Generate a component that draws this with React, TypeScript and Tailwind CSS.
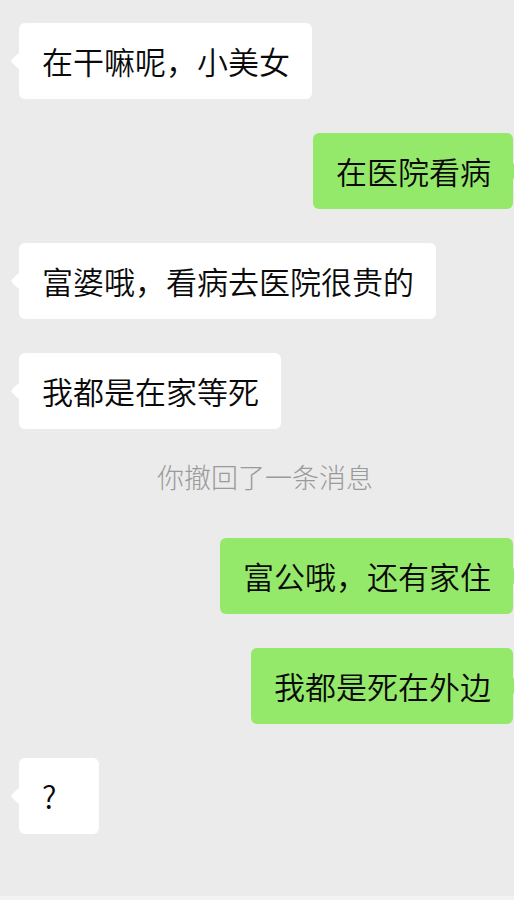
import React from 'react';

type Msg =
  | { kind: 'left' | 'right'; text: string }
  | { kind: 'system'; text: string };

const messages: Msg[] = [
  { kind: 'left', text: '在干嘛呢，小美女' },
  { kind: 'right', text: '在医院看病' },
  { kind: 'left', text: '富婆哦，看病去医院很贵的' },
  { kind: 'left', text: '我都是在家等死' },
  { kind: 'system', text: '你撤回了一条消息' },
  { kind: 'right', text: '富公哦，还有家住' },
  { kind: 'right', text: '我都是死在外边' },
  { kind: 'left', text: '?' },
];

const font = { fontFamily: '"Noto Sans CJK SC", "Noto Sans", sans-serif' };

// 对方的气泡（白色，左侧）
const LeftBubble = ({ text }: { text: string }) => (
  <div className="flex justify-start pl-[19px]">
    <div className="relative bg-white rounded-[6px] pl-[23px] pr-[22px] py-5 min-w-[80px] text-[31px] leading-[36px] [font-weight:350] text-[#0a0a0a]">
      <span className="absolute left-[-6px] top-1/2 -translate-y-1/2 w-[12px] h-[12px] rotate-45 bg-white rounded-[2px]" />
      <span className="relative">{text}</span>
    </div>
  </div>
);

// 自己的气泡（绿色，右侧）
const RightBubble = ({ text }: { text: string }) => (
  <div className="flex justify-end pr-[1px]">
    <div className="relative bg-[#95e96a] rounded-[6px] pl-[23px] pr-[22px] py-5 text-[31px] leading-[36px] [font-weight:350] text-[#0a0a0a]">
      <span className="absolute right-[-6px] top-1/2 -translate-y-1/2 w-[12px] h-[12px] rotate-45 bg-[#95e96a] rounded-[2px]" />
      <span className="relative">{text}</span>
    </div>
  </div>
);

export default function App() {
  return (
    <div className="w-[514px] h-[900px] overflow-hidden bg-[#ebebeb] flex flex-col" style={font}>
      <div className="flex-1 flex flex-col gap-[34px] pt-[23px]">
        {messages.map((m, i) =>
          m.kind === 'system' ? (
            <div
              key={i}
              className="mt-[-4px] mb-[9px] h-[36px] pl-[16px] text-center text-[27px] leading-[36px] font-light text-[#9a9a9a]"
            >
              {m.text}
            </div>
          ) : m.kind === 'left' ? (
            <LeftBubble key={i} text={m.text} />
          ) : (
            <RightBubble key={i} text={m.text} />
          )
        )}
      </div>
      <div className="h-[4px] bg-[#f3f3f3]" />
    </div>
  );
}
